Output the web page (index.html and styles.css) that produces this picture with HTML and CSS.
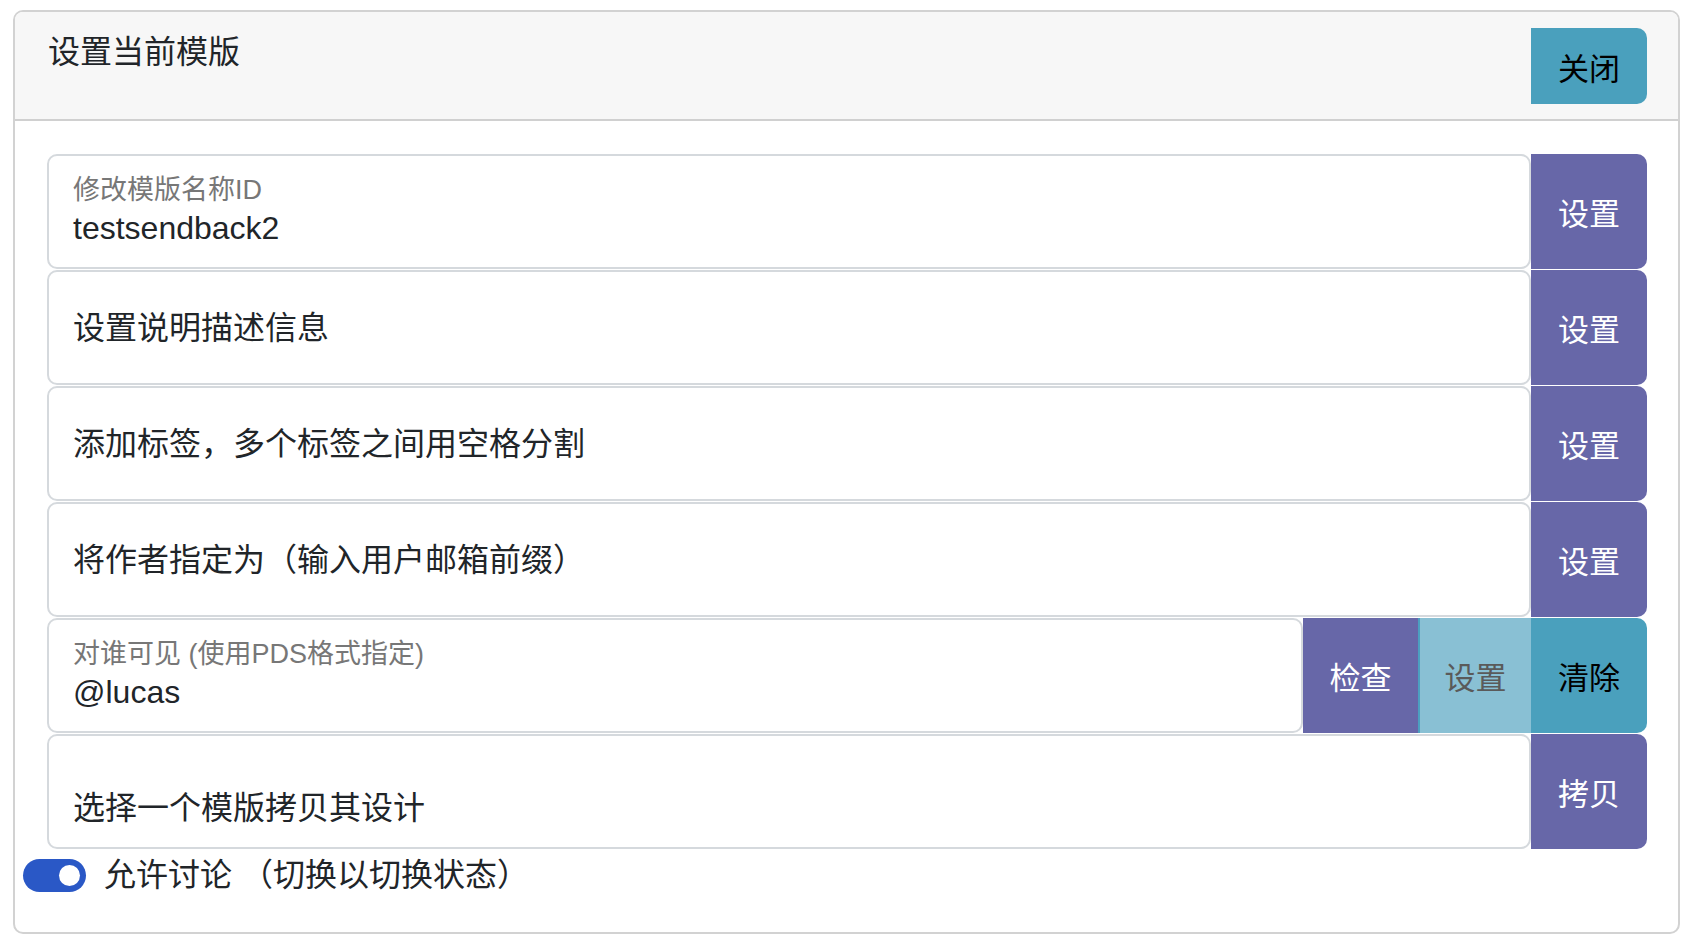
FILE: index.html
```html
<!DOCTYPE html>
<html lang="zh-CN">
<head>
<meta charset="UTF-8" />
<meta name="viewport" content="width=device-width, initial-scale=1" />
<title>设置当前模版</title>
<link rel="stylesheet" href="styles.css">
</head>
<body>
  <div class="modal">
    <div class="modal-header">
      <h5 class="modal-title">设置当前模版</h5>
      <button class="btn btn-teal btn-end">关闭</button>
    </div>

    <div class="modal-body">
      <div class="input-row">
        <div class="field floating">
          <label class="field-label">修改模版名称ID</label>
          <div class="field-value">testsendback2</div>
        </div>
        <button class="btn btn-purple btn-end">设置</button>
      </div>

      <div class="input-row">
        <div class="field">
          <div class="field-text">设置说明描述信息</div>
        </div>
        <button class="btn btn-purple btn-end">设置</button>
      </div>

      <div class="input-row">
        <div class="field">
          <div class="field-text">添加标签，多个标签之间用空格分割</div>
        </div>
        <button class="btn btn-purple btn-end">设置</button>
      </div>

      <div class="input-row">
        <div class="field">
          <div class="field-text">将作者指定为（输入用户邮箱前缀）</div>
        </div>
        <button class="btn btn-purple btn-end">设置</button>
      </div>

      <div class="input-row">
        <div class="field floating">
          <label class="field-label">对谁可见 (使用PDS格式指定)</label>
          <div class="field-value">@lucas</div>
        </div>
        <button class="btn btn-purple btn-check">检查</button>
        <button class="btn btn-light-teal btn-mid">设置</button>
        <button class="btn btn-teal btn-end">清除</button>
      </div>

      <div class="input-row">
        <div class="field floating">
          <label class="field-label"></label>
          <div class="field-value">选择一个模版拷贝其设计</div>
        </div>
        <button class="btn btn-purple btn-end">拷贝</button>
      </div>

      <div class="switch-row">
        <span class="switch"><span class="knob"></span></span>
        <span class="switch-label">允许讨论 （切换以切换状态）</span>
      </div>
    </div>
  </div>
</body>
</html>
```

FILE: styles.css
```css
/* Reset & base */
* {
  box-sizing: border-box;
}
body {
  margin: 0;
  background: #fff;
  color: #212529;
  font-family: "Liberation Sans", "Noto Sans CJK SC", sans-serif;
}

/* Card */
.modal {
  width: 1667px;
  margin: 10px 0 0 13px;
  border: 2px solid #d2d2d2;
  border-radius: 10px;
  overflow: hidden;
}

.modal-header {
  display: flex;
  justify-content: space-between;
  align-items: flex-start;
  padding: 16px 31px 15px 33px;
  background: #f7f7f7;
  border-bottom: 2px solid #d0d0d0;
}

.modal-title {
  margin: 2px 0 0;
  font-size: 32px;
  font-weight: 400;
  line-height: 45px;
  color: #212529;
}

/* Buttons */
.btn {
  flex: none;
  width: 116px;
  border: none;
  margin: 0;
  padding: 0;
  font-family: "Liberation Sans", "Noto Sans CJK SC", sans-serif;
  font-size: 31px;
  cursor: pointer;
}
.modal-header .btn {
  height: 76px;
}
.btn-end {
  border-radius: 0 10px 10px 0;
}
.btn-teal {
  background: #4aa0bd;
  color: #000;
}
.btn-purple {
  background: #6767a8;
  color: #fff;
}
.btn-light-teal {
  background: #89c0d4;
  color: #5a5a5a;
  border-left: 2px solid #4c9fc0;
}
.btn-check {
  width: 115px;
}
.btn-mid {
  width: 113px;
}

/* Body */
.modal-body {
  padding: 33px 31px 37px 32px;
}

.input-row {
  display: flex;
  height: 115px;
  margin-bottom: 1px;
}

.field {
  flex: 1;
  display: flex;
  flex-direction: column;
  justify-content: center;
  padding: 0 24px;
  border: 2px solid #d5d9dd;
  border-radius: 10px;
  background: #fff;
}
.field.floating {
  justify-content: flex-start;
  padding-top: 19px;
}

.field-text {
  font-size: 32px;
  line-height: 44px;
  color: #212529;
}

.field-label {
  min-height: 30px;
  font-size: 27px;
  line-height: 30px;
  color: #777;
}

.field-value {
  margin-top: 1px;
  font-size: 32px;
  line-height: 44px;
  color: #212529;
}

/* Toggle */
.switch-row {
  display: flex;
  align-items: center;
  gap: 18px;
  margin: 6px 0 0 -24px;
}

.switch {
  position: relative;
  width: 63px;
  height: 33px;
  border-radius: 17px;
  background: #2a58c6;
}
.switch .knob {
  position: absolute;
  top: 6px;
  right: 6px;
  width: 21px;
  height: 21px;
  border-radius: 50%;
  background: #fff;
}

.switch-label {
  font-size: 32px;
  line-height: 40px;
  color: #212529;
}
```
